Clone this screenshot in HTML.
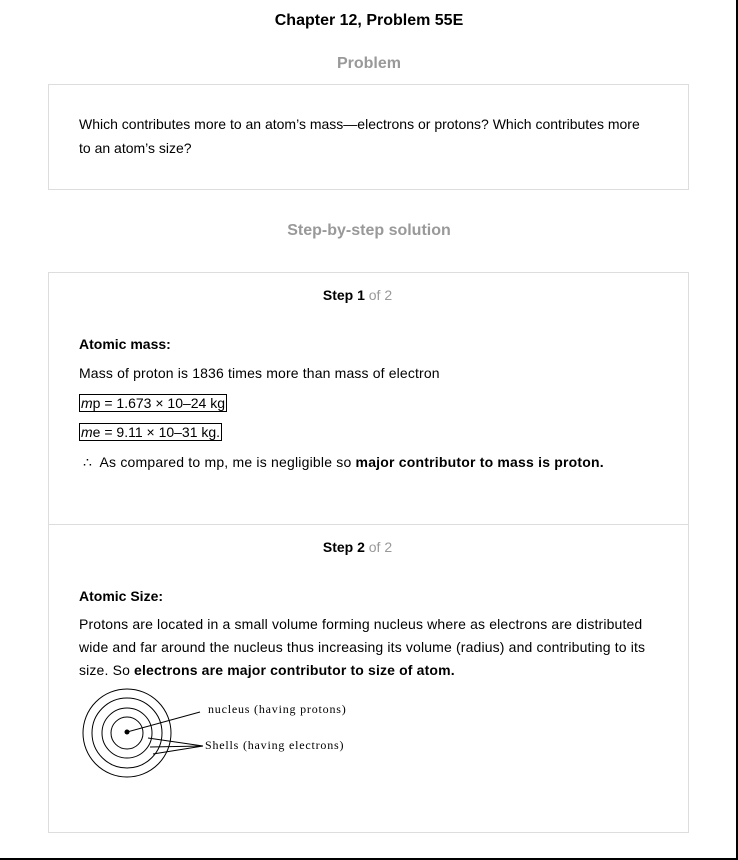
<!DOCTYPE html>
<html><head><meta charset="utf-8"><style>
body{margin:0;width:738px;height:860px;background:#fff;font-family:"Liberation Sans",Arial,sans-serif;font-size:14px;color:#000;position:relative;overflow:hidden}
.frame{position:absolute;right:0;top:0;width:2px;height:860px;background:#000}
.frameb{position:absolute;left:0;bottom:0;width:738px;height:2px;background:#000}
.abs{position:absolute}
.h{font-weight:bold;text-align:center;width:738px;left:0}
.box{position:absolute;left:48px;width:639px;border:1px solid #ddd}
.g{color:#999}
.bx{border:1px solid #000;padding:0 1px;display:inline-block;line-height:16px}
</style></head><body>
<div class="frame"></div><div class="frameb"></div>
<div class="abs h" style="top:12px;font-size:16px">Chapter 12, Problem 55E</div>
<div class="abs h g" style="top:55px;font-size:16px">Problem</div>
<div class="box" style="top:84px;height:104px">
<div class="abs" style="left:30px;top:27px;width:570px;line-height:24px">Which contributes more to an atom’s mass—electrons or protons? Which contributes more to an atom’s size?</div>
</div>
<div class="abs h g" style="top:222px;font-size:16px">Step-by-step solution</div>
<div class="box" style="top:272px;height:559px">
<div class="abs h" style="left:-11px;width:639px;top:14px"><b>Step 1</b> <span class="g" style="font-weight:normal">of 2</span></div>
<div class="abs" style="left:30px;top:63px"><b>Atomic mass:</b></div>
<div class="abs" style="left:30px;top:92px;letter-spacing:0.15px">Mass of proton is 1836 times more than mass of electron</div>
<div class="abs" style="left:30px;top:121px"><span class="bx"><i>m</i>p = 1.673 × 10–24 kg</span></div>
<div class="abs" style="left:30px;top:150px"><span class="bx"><i>m</i>e = 9.11 × 10–31 kg.</span></div>
<div class="abs" style="left:34px;top:181px;letter-spacing:0.2px">∴&nbsp; As compared to mp, me is negligible so <b>major contributor to mass is proton.</b></div>
<div class="abs" style="left:0;top:251px;width:639px;height:1px;background:#ddd"></div>
<div class="abs h" style="left:-11px;width:639px;top:266px"><b>Step 2</b> <span class="g" style="font-weight:normal">of 2</span></div>
<div class="abs" style="left:30px;top:315px"><b>Atomic Size:</b></div>
<div class="abs" style="left:30px;top:340px;width:580px;line-height:23px;letter-spacing:0.15px">Protons are located in a small volume forming nucleus where as electrons are distributed wide and far around the nucleus thus increasing its volume (radius) and contributing to its size. So <b>electrons are major contributor to size of atom.</b></div>
</div>
<svg class="abs" style="left:0;top:0" width="738" height="860">
<g fill="none" stroke="#000" stroke-width="1">
<circle cx="127" cy="733" r="44"/><circle cx="127" cy="733" r="35"/><circle cx="127" cy="733" r="25"/><circle cx="127" cy="733" r="16"/>
<line x1="127" y1="732" x2="200" y2="712"/>
<line x1="148" y1="738" x2="203" y2="746"/><line x1="150" y1="747" x2="203" y2="746"/><line x1="153" y1="754" x2="203" y2="746"/>
</g>
<circle cx="127" cy="732" r="2.5"/>
<text x="208" y="713" font-family="Liberation Serif,serif" font-size="12" letter-spacing="0.8">nucleus (having protons)</text>
<text x="205" y="749" font-family="Liberation Serif,serif" font-size="12" letter-spacing="0.8">Shells (having electrons)</text>
</svg>
</body></html>
